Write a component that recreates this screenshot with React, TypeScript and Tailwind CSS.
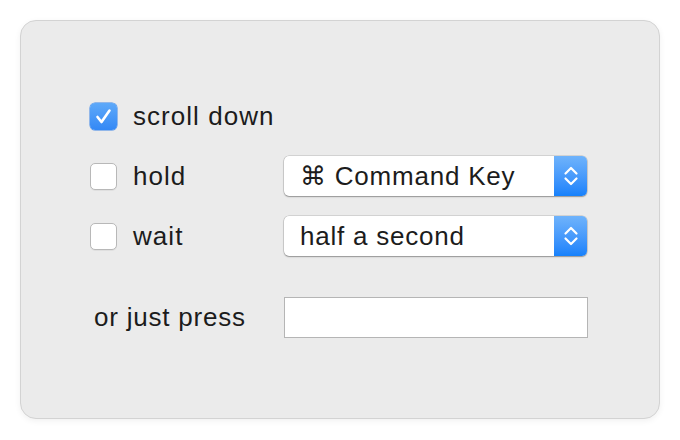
import React, { useState } from "react";

const font = { fontFamily: '"Liberation Sans", Arial, sans-serif' };

const Check = ({ checked, onChange }: { checked: boolean; onChange: () => void }) => (
  <button
    onClick={onChange}
    className={
      checked
        ? "w-[27px] h-[27px] rounded-[5px] bg-gradient-to-b from-[#5ea9f9] to-[#3388f5] flex items-center justify-center shrink-0 shadow-[0_0_0_0.5px_#3a84e8]"
        : "w-[27px] h-[27px] rounded-[5px] bg-white border border-[#b8b8b8] shrink-0 shadow-[0_1px_0_rgba(0,0,0,0.05)]"
    }
  >
    {checked && (
      <svg width="19" height="19" viewBox="0 0 19 19" fill="none">
        <path d="M3.5 10 L7.5 15 L15.5 3.5" stroke="white" strokeWidth="2.6" strokeLinecap="round" strokeLinejoin="round" />
      </svg>
    )}
  </button>
);

const Select = ({ value }: { value: string }) => (
  <div className="w-[303px] h-[40px] rounded-[5px] bg-white flex items-stretch shadow-[0_0_0_0.5px_rgba(0,0,0,0.2),0_1px_1.5px_rgba(0,0,0,0.3)] overflow-hidden">
    <div className="flex-1 flex items-center pl-[16px] text-[26px] tracking-[0.03em] text-[#1c1c1c]">{value}</div>
    <div className="w-[33px] bg-gradient-to-b from-[#6fb3fb] to-[#1581fb] flex items-center justify-center">
      <svg width="18" height="28" viewBox="0 0 18 28" fill="none">
        <path d="M3.5 11.5 L9 6 L14.5 11.5" stroke="white" strokeWidth="2.2" strokeLinecap="round" strokeLinejoin="round" />
        <path d="M3.5 16.5 L9 22 L14.5 16.5" stroke="white" strokeWidth="2.2" strokeLinecap="round" strokeLinejoin="round" />
      </svg>
    </div>
  </div>
);

export default function App() {
  const [scroll, setScroll] = useState(true);
  const [hold, setHold] = useState(false);
  const [wait, setWait] = useState(false);

  return (
    <div className="w-[680px] h-[440px] bg-white pt-[20px] pl-[20px]" style={font}>
      <div className="w-[640px] h-[399px] rounded-[16px] bg-[#ebebeb] border border-[#d3d3d3] shadow-[0_2px_6px_rgba(0,0,0,0.06)] pt-[75px] pl-[69px] flex flex-col">
        <div className="flex flex-col gap-[20px]">
          <div className="h-[40px] flex items-center">
            <Check checked={scroll} onChange={() => setScroll(!scroll)} />
            <span className="ml-[16px] text-[26px] tracking-[0.04em] text-[#1c1c1c]">scroll down</span>
          </div>
          <div className="h-[40px] flex items-center">
            <Check checked={hold} onChange={() => setHold(!hold)} />
            <span className="ml-[16px] w-[151px] text-[26px] tracking-[0.04em] text-[#1c1c1c]">hold</span>
            <Select value="⌘ Command Key" />
          </div>
          <div className="h-[40px] flex items-center">
            <Check checked={wait} onChange={() => setWait(!wait)} />
            <span className="ml-[16px] w-[151px] text-[26px] tracking-[0.04em] text-[#1c1c1c]">wait</span>
            <Select value="half a second" />
          </div>
        </div>
        <div className="mt-[41px] h-[41px] flex items-center">
          <span className="ml-[4px] w-[190px] text-[26px] tracking-[0.03em] text-[#1c1c1c]">or just press</span>
          <input className="w-[304px] h-[41px] bg-white border border-[#b5b5b5] outline-none px-2 text-[22px]" />
        </div>
      </div>
    </div>
  );
}
